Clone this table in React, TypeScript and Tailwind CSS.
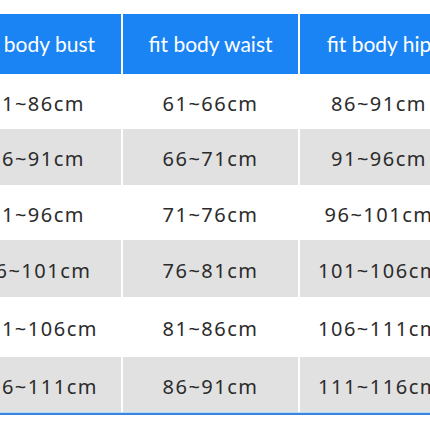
const headers = ["fit body bust", "fit body waist", "fit body hip"];

const rows = [
  { cells: ["81~86cm", "61~66cm", "86~91cm"], h: "h-[55px]", gray: false },
  { cells: ["86~91cm", "66~71cm", "91~96cm"], h: "h-[56px]", gray: true },
  { cells: ["91~96cm", "71~76cm", "96~101cm"], h: "h-[55px]", gray: false },
  { cells: ["96~101cm", "76~81cm", "101~106cm"], h: "h-[57px]", gray: true },
  { cells: ["101~106cm", "81~86cm", "106~111cm"], h: "h-[60px]", gray: false },
  { cells: ["106~111cm", "86~91cm", "111~116cm"], h: "h-[55px]", gray: true },
];

const App = () => {
  return (
    <div className="w-[430px] h-[430px] overflow-hidden bg-white pt-[14px]">
      <div className="w-[505px] -ml-[47px] grid grid-cols-[168px_175px_158px] gap-x-[2px]">
        {/* Header */}
        {headers.map((h) => (
          <div
            key={h}
            className="h-[60px] bg-[#1a84f4] flex items-center justify-center text-white text-[21px] whitespace-nowrap font-['Lato',sans-serif]"
          >
            {h}
          </div>
        ))}

        {/* Body rows */}
        {rows.map((row, i) =>
          row.cells.map((c, j) => (
            <div
              key={`${i}-${j}`}
              className={`${row.h} ${
                row.gray ? "bg-[#e1e1e1]" : "bg-white"
              } flex items-center justify-center pt-[4px] text-[#2b2b2b] text-[20px] tracking-[1.5px] whitespace-nowrap font-['Noto_Sans',sans-serif]`}
            >
              {c}
            </div>
          ))
        )}
      </div>
      <div className="h-[1px] bg-[#b8dbf7]" />
      <div className="h-[2px] bg-[#3a83de]" />
    </div>
  );
};

export default App;
